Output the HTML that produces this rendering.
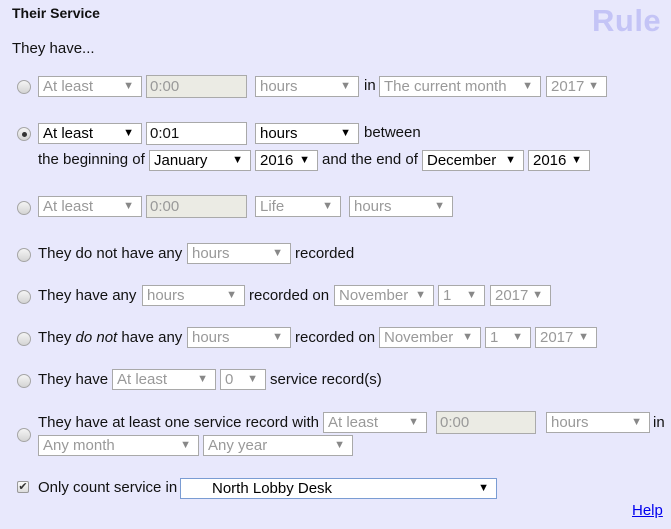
<!DOCTYPE html>
<html><head><style>
body{margin:0;width:671px;height:529px;background:#e8e8fc;font-family:"Liberation Sans",Arial,sans-serif;font-size:15px;color:#111;position:relative;overflow:hidden}
.a{position:absolute;white-space:nowrap}
.t{position:absolute;white-space:nowrap;line-height:18px}
.s{position:absolute;box-sizing:border-box;height:21px;border:1px solid #a9a9a9;background:#fff;line-height:19px;padding-left:4px;color:#000}
.s::after{content:"▼";position:absolute;right:7px;top:0;font-size:11px;color:#000}
.d{color:#999}
.d::after{color:#888}
.i{position:absolute;box-sizing:border-box;height:23px;border:1px solid #a9a9a9;background:#fff;line-height:21px;padding-left:3px}
.i.d{background:#ebebe4;border-color:#aaa;color:#999}
.r{position:absolute;width:14px;height:14px;border-radius:50%;box-sizing:border-box;border:1px solid #a6a6a6;background:linear-gradient(#f4f4f4,#d4d4d4)}
.r.on::after{content:"";position:absolute;left:3.5px;top:3.5px;width:5px;height:5px;border-radius:50%;background:#333}
</style></head><body>
<div class="t" style="left:12px;top:4px;font-weight:bold;font-size:14px">Their Service</div>
<div class="a" style="left:592px;top:3px;font-weight:bold;font-size:31px;color:#c4c4f6;letter-spacing:0.5px">Rule</div>
<div class="t" style="left:12px;top:40px">They have...</div>

<div class="r" style="left:17px;top:80px"></div>
<div class="s d" style="left:38px;top:76px;width:104px">At least</div>
<div class="i d" style="left:146px;top:75px;width:101px">0:00</div>
<div class="s d" style="left:255px;top:76px;width:104px">hours</div>
<div class="t" style="left:364px;top:77px">in</div>
<div class="s d" style="left:379px;top:76px;width:162px">The current month</div>
<div class="s d" style="left:546px;top:76px;width:61px">2017</div>

<div class="r on" style="left:17px;top:127px"></div>
<div class="s" style="left:38px;top:123px;width:104px">At least</div>
<div class="i" style="left:146px;top:122px;width:101px">0:01</div>
<div class="s" style="left:255px;top:123px;width:104px">hours</div>
<div class="t" style="left:364px;top:124px">between</div>
<div class="t" style="left:38px;top:151px">the beginning of</div>
<div class="s" style="left:149px;top:150px;width:102px">January</div>
<div class="s" style="left:255px;top:150px;width:63px">2016</div>
<div class="t" style="left:322px;top:151px">and the end of</div>
<div class="s" style="left:422px;top:150px;width:102px">December</div>
<div class="s" style="left:528px;top:150px;width:62px">2016</div>

<div class="r" style="left:17px;top:201px"></div>
<div class="s d" style="left:38px;top:196px;width:104px">At least</div>
<div class="i d" style="left:146px;top:195px;width:101px">0:00</div>
<div class="s d" style="left:255px;top:196px;width:86px">Life</div>
<div class="s d" style="left:349px;top:196px;width:104px">hours</div>

<div class="r" style="left:17px;top:248px"></div>
<div class="t" style="left:38px;top:245px">They do not have any</div>
<div class="s d" style="left:187px;top:243px;width:104px">hours</div>
<div class="t" style="left:295px;top:245px">recorded</div>

<div class="r" style="left:17px;top:290px"></div>
<div class="t" style="left:38px;top:287px">They have any</div>
<div class="s d" style="left:142px;top:285px;width:103px">hours</div>
<div class="t" style="left:249px;top:287px">recorded on</div>
<div class="s d" style="left:334px;top:285px;width:100px">November</div>
<div class="s d" style="left:438px;top:285px;width:47px">1</div>
<div class="s d" style="left:490px;top:285px;width:61px">2017</div>

<div class="r" style="left:17px;top:332px"></div>
<div class="t" style="left:38px;top:329px">They <i>do not</i> have any</div>
<div class="s d" style="left:187px;top:327px;width:104px">hours</div>
<div class="t" style="left:295px;top:329px">recorded on</div>
<div class="s d" style="left:379px;top:327px;width:102px">November</div>
<div class="s d" style="left:485px;top:327px;width:46px">1</div>
<div class="s d" style="left:535px;top:327px;width:62px">2017</div>

<div class="r" style="left:17px;top:374px"></div>
<div class="t" style="left:38px;top:371px">They have</div>
<div class="s d" style="left:112px;top:369px;width:104px">At least</div>
<div class="s d" style="left:220px;top:369px;width:46px">0</div>
<div class="t" style="left:270px;top:371px">service record(s)</div>

<div class="r" style="left:17px;top:428px"></div>
<div class="t" style="left:38px;top:414px">They have at least one service record with</div>
<div class="s d" style="left:323px;top:412px;width:104px">At least</div>
<div class="i d" style="left:436px;top:411px;width:100px">0:00</div>
<div class="s d" style="left:546px;top:412px;width:104px">hours</div>
<div class="t" style="left:653px;top:414px">in</div>
<div class="s d" style="left:38px;top:435px;width:161px">Any month</div>
<div class="s d" style="left:203px;top:435px;width:150px">Any year</div>

<div style="position:absolute;left:17px;top:481px;width:12px;height:12px;box-sizing:border-box;border:1px solid #999;background:linear-gradient(#fafafa,#ddd);border-radius:2px;font-size:11px;line-height:10px;text-align:center;color:#333">✔</div>
<div class="t" style="left:38px;top:479px">Only count service in</div>
<div class="s" style="left:180px;top:478px;width:317px;border-color:#7a9cd3;padding-left:31px">North Lobby Desk</div>

<div class="t" style="left:632px;top:502px;color:#0000ee;text-decoration:underline">Help</div>
</body></html>
